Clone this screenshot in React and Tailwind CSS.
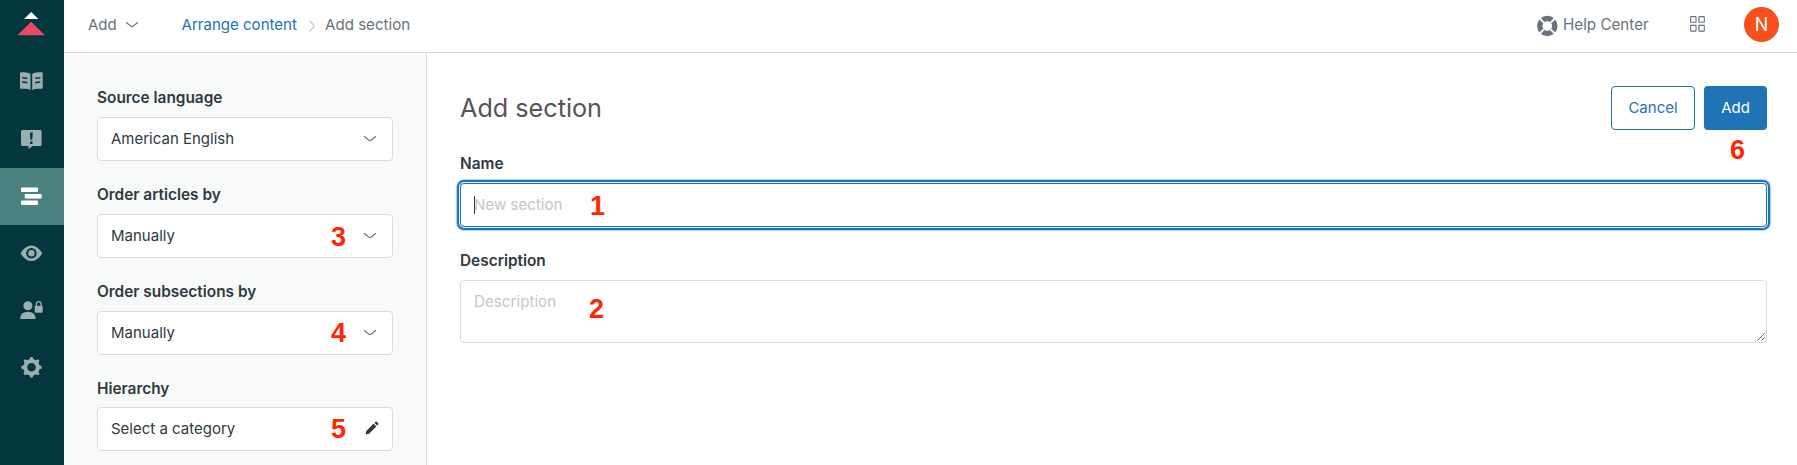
import React from 'react';

function NavItem({ top, active, children }) {
  return (
    <a className={active ? 'block h-[57px] w-16 bg-[#4a8280] text-white' : 'block h-[57px] w-16 text-[#9bafb1]'}>
      <svg width="64" height="57" viewBox={`0 ${top} 64 57`} fill="currentColor">
        {children}
      </svg>
    </a>
  );
}

function Sidebar() {
  return (
    <nav className="flex w-16 shrink-0 flex-col bg-[#03363d]">
      <svg className="mb-px shrink-0" width="64" height="53" viewBox="0 0 64 53">
        <path d="M31.2 12 38.4 19H24z" fill="#fff" />
        <path d="M31.2 21.7 45 35.3H17.4z" fill="#eb4962" />
      </svg>
      <NavItem top={54}>
        <path
          fillRule="evenodd"
          d="M20 73.3q0-1 1-1h3.5q3.700 0 6 1.500V90q-2.500-1.300-6-1.300H21q-1 0-1-1zM22.300 77v1.500l5 .6v-1.600zM22.300 81.300v1.500l5 .6v-1.600zM42.700 73.300q0-1-1-1h-3.500q-3.700 0-6 1.500V90q2.500-1.300 6-1.300h3.500q1 0 1-1zM40.300 77v1.500l-5 .6v-1.600zM40.300 81.300v1.500l-5 .6v-1.600z"
        />
      </NavItem>
      <NavItem top={111}>
        <path
          fillRule="evenodd"
          d="M22.500 130h17.600q1.500 0 1.500 1.500v13q0 1.500-1.500 1.500h-7.300l-4.300 3v-3h-6q-1.500 0-1.500-1.500v-13q0-1.500 1.500-1.500zM29.900 132.600l.5 7.200h1.900l.5-7.200zM31.300 141.300a1.400 1.400 0 1 0 .01 0z"
        />
      </NavItem>
      <NavItem top={168} active>
        <rect x="21" y="187.400" width="17" height="4.600" rx="1" />
        <rect x="24.700" y="194" width="17" height="4.400" rx="1" />
        <rect x="21" y="200.500" width="17" height="4.600" rx="1" />
      </NavItem>
      <NavItem top={225}>
        <path
          fillRule="evenodd"
          d="M20.500 253.300q4.700-7.800 10.900-7.800t10.900 7.800q-4.700 7.800-10.900 7.800t-10.900-7.800zM31.400 248.100a5.200 5.200 0 1 0 .01 0z"
        />
        <circle cx="31.400" cy="253.300" r="3.200" />
      </NavItem>
      <NavItem top={282}>
        <circle cx="27.900" cy="305.700" r="4.500" />
        <path d="M20.200 319q0-7.300 7.700-7.300t7.700 7.300z" />
        <rect x="34.700" y="305.700" width="8" height="7" rx="1" />
        <path d="M36.300 306.500v-2.400a2.400 2.400 0 0 1 4.800 0v2.400" fill="none" stroke="currentColor" strokeWidth="1.300" />
      </NavItem>
      <NavItem top={339}>
        <circle cx="31.500" cy="367.300" r="6.300" fill="none" stroke="currentColor" strokeWidth="4" />
        {[0, 45, 90, 135, 180, 225, 270, 315].map((a) => (
          <path key={a} d="M29.300 359.900 30.400 357.100h2.200l1.100 2.800z" transform={`rotate(${a} 31.500 367.300)`} />
        ))}
      </NavItem>
    </nav>
  );
}

function Chevron({ className }) {
  return (
    <svg className={className} width="14" height="8" viewBox="0 0 14 8" fill="none" stroke="currentColor" strokeWidth="1.100" strokeLinecap="round" strokeLinejoin="round">
      <path d="M1.300 1.500 6 5.300q1 .7 2 0l4.700-3.800" />
    </svg>
  );
}

function Header() {
  return (
    <header className="flex h-[53px] shrink-0 items-center border-b border-[#d8dcde] pb-[3px] pl-6 pr-[18px] text-[15px] leading-5 text-[#68737d]">
      <span className="w-[28px]">Add</span>
      <Chevron className="ml-[9px] shrink-0" />
      <a className="ml-[42.500px] w-[116.500px] whitespace-nowrap text-[15.060px] text-[#1f73b7]">Arrange content</a>
      <svg className="ml-[11px] mt-[3px] shrink-0" width="6" height="12" viewBox="0 0 6 12" fill="none" stroke="#c2c8cc" strokeWidth="1.200" strokeLinecap="round">
        <path d="M.8.8 4.700 5.200q.6.800 0 1.600L.8 11.200" />
      </svg>
      <span className="ml-[10px] whitespace-nowrap text-[15.100px]">Add section</span>
      <div className="ml-auto flex items-center">
        <svg className="mt-[3px]" width="22" height="22" viewBox="0 0 22 22">
          <circle cx="10.300" cy="11" r="7.500" fill="none" stroke="currentColor" strokeWidth="5.400" />
          <path d="M2.800 3.500 6.900 7.600M17.800 3.500 13.700 7.600M2.800 18.500 6.900 14.400M17.800 18.500 13.700 14.400" stroke="#fff" strokeWidth="1.900" />
        </svg>
        <span className="ml-1 w-[86px] whitespace-nowrap text-[15.200px]">Help Center</span>
        <svg className="ml-[41px]" width="16" height="17" viewBox="0 0 16 17" fill="none" stroke="currentColor" strokeWidth="1.100">
          <rect x=".6" y=".6" width="5.400" height="5.700" rx=".4" />
          <rect x="8.900" y=".6" width="5.400" height="5.700" rx=".4" />
          <rect x=".6" y="9.400" width="5.400" height="5.700" rx=".4" />
          <rect x="8.900" y="9.400" width="5.400" height="5.700" rx=".4" />
        </svg>
        <div className="ml-[38px] flex size-[35px] items-center justify-center rounded-full bg-[#f8501c] text-[18px] text-white">N</div>
      </div>
    </header>
  );
}

function Label({ children }) {
  return <div className="h-5 whitespace-nowrap text-[15.400px] font-semibold leading-[22px] text-[#2f3941]">{children}</div>;
}

function Select({ label, value, className, boxClass, icon }) {
  return (
    <div className={className}>
      <Label>{label}</Label>
      <div className={`${boxClass} flex h-11 w-[296px] items-center justify-between rounded border border-[#d8dcde] bg-white pl-[13px] text-[15px] text-[#2f3941]`}>
        <span>{value}</span>
        {icon || <Chevron className="mr-[15px] text-[#68737d]" />}
      </div>
    </div>
  );
}

const pencil = (
  <svg className="mb-[3px] mr-[13px]" width="14" height="14" viewBox="0 0 14 14" fill="#2f3941">
    <path d="M.5 13.500 1.300 9.900 8.600 2.600l2.800 2.800-7.300 7.300zM9.400 1.800l.9-.9q.9-.8 1.800 0l1 1q.8.900 0 1.800l-.9.900z" />
  </svg>
);

const marks = [
  ['1', 'left-[590px] top-[191px]'],
  ['2', 'left-[589px] top-[294px]'],
  ['3', 'left-[331px] top-[222px]'],
  ['4', 'left-[331px] top-[318px]'],
  ['5', 'left-[331px] top-[414px]'],
  ['6', 'left-[1730px] top-[135px]'],
];

export default function App() {
  return (
    <div className="relative flex h-[465px] w-[1797px] overflow-hidden bg-white font-[Inter,sans-serif]">
      <Sidebar />
      <div className="flex min-w-0 flex-1 flex-col">
        <Header />
        <div className="flex min-h-0 flex-1">
          <aside className="w-[363px] shrink-0 border-r border-[#d8dcde] bg-[#f8faf9] pl-[33px] pt-[34px]">
            <Select label="Source language" value="American English" boxClass="mt-2.5" />
            <Select label="Order articles by" value="Manually" className="mt-[23px]" boxClass="mt-2.5" />
            <Select label="Order subsections by" value="Manually" className="mt-[23px]" boxClass="mt-2.5" />
            <Select label="Hierarchy" value="Select a category" className="mt-[23px]" boxClass="mt-[9px]" icon={pencil} />
          </aside>
          <main className="flex-1 pl-[33px] pr-[30px] pt-[33px]">
            <div className="flex h-11 items-center">
              <h1 className="text-[25.200px] leading-8 text-[#555]">Add section</h1>
              <div className="ml-auto flex gap-[9px] text-[15px]">
                <button className="h-11 w-[84px] rounded border border-[#1f73b7] text-[#1f73b7]">Cancel</button>
                <button className="h-11 w-[63px] rounded bg-[#1f73b7] text-white">Add</button>
              </div>
            </div>
            <div className="mt-[23px]">
              <Label>Name</Label>
              <div className="mt-2.5 flex h-11 items-center rounded border border-[#1f73b7] pl-3 text-[15.100px] text-[#c2c8cc] shadow-[0_0_0_1px_#e4f0f9,0_0_0_3px_#1f73b7,0_0_0_4px_#b3d2ec]">
                <span className="-mr-px ml-px h-[18px] w-px bg-[#2f3941]" />
                <span className="pt-px">New section</span>
              </div>
            </div>
            <div className="mt-[23px]">
              <Label>Description</Label>
              <div className="mt-2.5 flex h-[63px] justify-between rounded border border-[#d8dcde] pl-[13px] pt-[11px] text-[15.200px] leading-5 text-[#c2c8cc]">
                <span>Description</span>
                <svg className="mb-px mr-px self-end" width="8" height="8" viewBox="0 0 8 8" stroke="#555" strokeWidth=".9">
                  <path d="M.5 7.500l7-7M4.500 7.500l3-3" />
                </svg>
              </div>
            </div>
          </main>
        </div>
      </div>
      {marks.map(([n, pos]) => (
        <span key={n} className={`${pos} absolute font-['Liberation_Sans',sans-serif] text-[27px] font-bold leading-[30px] text-[#ff2600]`}>
          {n}
        </span>
      ))}
    </div>
  );
}
